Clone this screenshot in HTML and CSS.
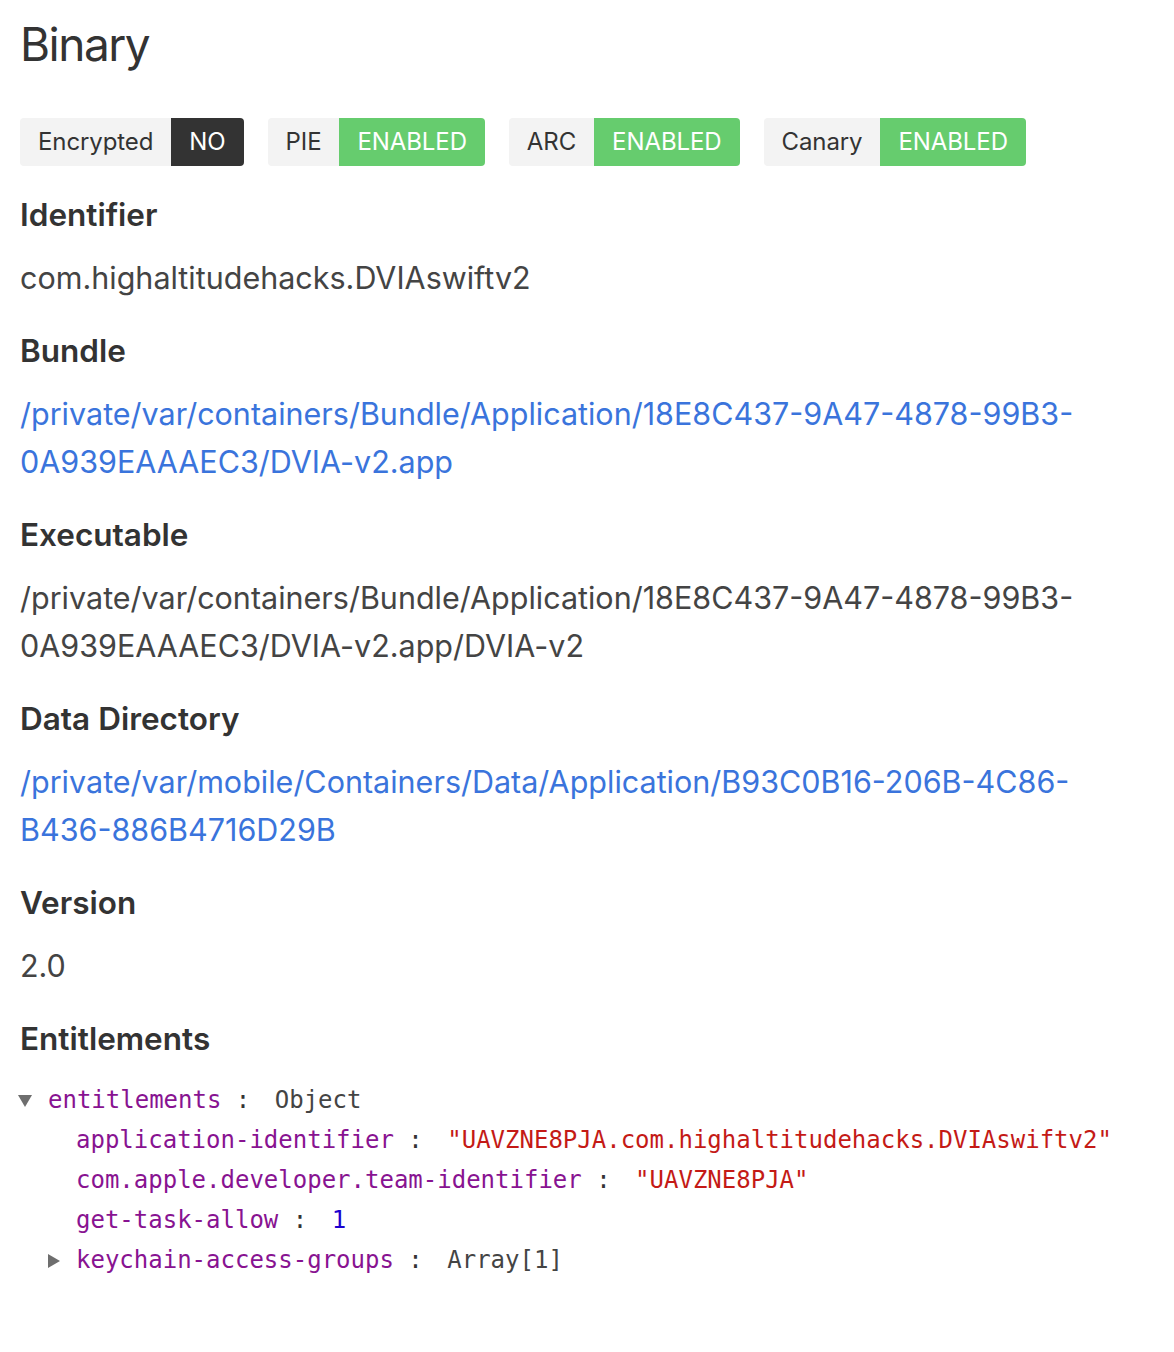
FILE: index.html
```html
<!DOCTYPE html>
<html>
<head>
<meta charset="utf-8">
<link rel="stylesheet" href="styles.css">
</head>
<body>
<main class="page">
  <h1 class="title">Binary</h1>
  <div class="badges">
    <div class="badge"><span class="badge-label">Encrypted</span><span class="badge-value dark">NO</span></div>
    <div class="badge"><span class="badge-label">PIE</span><span class="badge-value green">ENABLED</span></div>
    <div class="badge"><span class="badge-label">ARC</span><span class="badge-value green">ENABLED</span></div>
    <div class="badge"><span class="badge-label">Canary</span><span class="badge-value green">ENABLED</span></div>
  </div>

  <section class="field">
    <h3 class="field-title">Identifier</h3>
    <p class="field-value">com.highaltitudehacks.DVIAswiftv2</p>
  </section>

  <section class="field">
    <h3 class="field-title">Bundle</h3>
    <p class="field-value"><a class="link" href="#">/private/var/containers/Bundle/Application/18E8C437-9A47-4878-99B3-0A939EAAAEC3/DVIA-v2.app</a></p>
  </section>

  <section class="field">
    <h3 class="field-title">Executable</h3>
    <p class="field-value">/private/var/containers/Bundle/Application/18E8C437-9A47-4878-99B3-0A939EAAAEC3/DVIA-v2.app/DVIA-v2</p>
  </section>

  <section class="field">
    <h3 class="field-title">Data Directory</h3>
    <p class="field-value"><a class="link" href="#">/private/var/mobile/Containers/Data/Application/B93C0B16-206B-4C86-B436-886B4716D29B</a></p>
  </section>

  <section class="field">
    <h3 class="field-title">Version</h3>
    <p class="field-value">2.0</p>
  </section>

  <section class="field">
    <h3 class="field-title">Entitlements</h3>
    <div class="tree">
      <div class="row level0"><span class="arrow down"></span><span class="key">entitlements</span><span class="sep"> : </span><span class="plain">Object</span></div>
      <div class="row level1"><span class="key">application-identifier</span><span class="sep"> : </span><span class="str">"UAVZNE8PJA.com.highaltitudehacks.DVIAswiftv2"</span></div>
      <div class="row level1"><span class="key">com.apple.developer.team-identifier</span><span class="sep"> : </span><span class="str">"UAVZNE8PJA"</span></div>
      <div class="row level1"><span class="key">get-task-allow</span><span class="sep"> : </span><span class="num">1</span></div>
      <div class="row level1"><span class="arrow right"></span><span class="key">keychain-access-groups</span><span class="sep"> : </span><span class="plain">Array[1]</span></div>
    </div>
  </section>
</main>
</body>
</html>
```

FILE: styles.css
```css
html, body {
  margin: 0;
  padding: 0;
  background: #ffffff;
}

.page {
  padding: 16px 20px 40px 20px;
  font-family: "Inter", "Noto Sans", sans-serif;
  color: #333333;
}

.title {
  margin: 0;
  font-size: 46px;
  line-height: 56px;
  font-weight: 400;
  letter-spacing: -1.5px;
  color: #333333;
}

.badges {
  display: flex;
  gap: 24px;
  margin-top: 46px;
}

.badge {
  display: flex;
  height: 48px;
  border-radius: 4px;
  overflow: hidden;
  font-size: 24px;
  line-height: 48px;
  letter-spacing: -0.1px;
}

.badge-label {
  background: #f3f3f3;
  color: #333333;
  padding: 0 18px;
}

.badge-value {
  color: #ffffff;
  padding: 0 18px;
}

.badge-value.dark {
  background: #333333;
}

.badge-value.green {
  background: #66cc6e;
}

.field {
  margin-top: 29px;
}

.field-title {
  margin: 0 0 19px 0;
  font-size: 31.5px;
  line-height: 40px;
  font-weight: 600;
  color: #333333;
}

.field-value {
  margin: 0;
  font-size: 30.5px;
  line-height: 48px;
  color: #444444;
}

.link {
  color: #3a74dc;
  text-decoration: none;
}

.tree {
  margin-top: 21px;
  font-family: "DejaVu Sans Mono", "Liberation Mono", monospace;
  font-size: 24px;
  line-height: 40px;
}

.row {
  height: 40px;
  white-space: pre;
}

.row.level0 {
  padding-left: 28px;
}

.row.level1 {
  padding-left: 56px;
}

.arrow {
  display: inline-block;
  width: 0;
  height: 0;
  vertical-align: middle;
}

.arrow.down {
  border-left: 7px solid transparent;
  border-right: 7px solid transparent;
  border-top: 12px solid #6e6e6e;
  margin-left: -30px;
  margin-right: 16px;
}

.arrow.right {
  border-top: 7px solid transparent;
  border-bottom: 7px solid transparent;
  border-left: 12px solid #6e6e6e;
  margin-left: -28px;
  margin-right: 16px;
}

.key {
  color: #881391;
}

.sep {
  color: #333333;
  margin-right: 10px;
}

.plain {
  color: #444444;
}

.str {
  color: #c41a16;
}

.num {
  color: #1c00cf;
}
```
